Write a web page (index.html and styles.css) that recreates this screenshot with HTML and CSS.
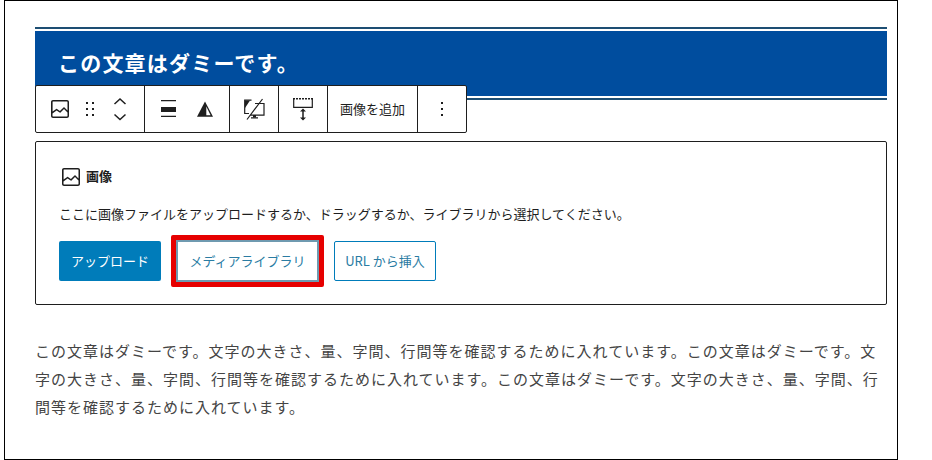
FILE: index.html
```html
<!DOCTYPE html>
<html lang="ja">
<head>
<meta charset="utf-8">
<title>画像ブロック</title>
<link rel="stylesheet" href="styles.css">
</head>
<body>
<div class="frame">
  <div class="hero">
    <div class="hero-inner"><h2 class="hero-title">この文章はダミーです。</h2></div>
    <div class="toolbar">
      <div class="group group-first">
        <svg class="icon" viewBox="0 0 24 24"><path d="M19 3H5c-1.1 0-2 .9-2 2v14c0 1.100.9 2 2 2h14c1.100 0 2-.9 2-2V5c0-1.100-.9-2-2-2zM5 4.500h14c.3 0 .5.2.5.5v8.400l-3-2.900c-.3-.3-.8-.3-1 0L11.900 14 9 12c-.3-.2-.6-.2-.8 0l-3.600 2.600V5c-.1-.3.1-.5.4-.5zm14 15H5c-.3 0-.5-.2-.5-.5v-2.400l4.100-3 3 1.900c.3.2.7.2.9-.1L16 12l3.500 3.400V19c0 .3-.2.5-.5.5z"/></svg>
        <svg class="icon" viewBox="0 0 24 24"><path d="M8 7h2V5H8zM8 13h2v-2H8zM8 19h2v-2H8zM14 5v2h2V5zM14 13h2v-2h-2zM14 19h2v-2h-2z"/></svg>
        <svg class="icon-tall" viewBox="0 0 24 30"><path class="line" d="M6.500 10 12 5l5.500 5M6.500 20.500l5.500 5 5.500-5"/></svg>
      </div>
      <div class="group">
        <svg class="icon" viewBox="0 0 24 24"><path d="M4 3h15v1.200H4zM4 10h15v5H4zM4 18.800h15V20H4z"/></svg>
        <svg class="icon" viewBox="0 0 24 24"><path d="M12 4.500 4 19.700h8z"/><path d="M12 4.500l8 15.200h-8zm1.300 5v8.700h4.300z"/></svg>
      </div>
      <div class="group">
        <svg class="icon" viewBox="0 0 24 24"><path class="line thin" d="M9.500 3.200H2.700V16.500H7M13 6.500h9V18.200H8M20.500 2 5 22.500M9 20.800H16"/><path d="M3 3.500h5L3 11z"/><path d="M11 18h3v2.500h-3z"/></svg>
      </div>
      <div class="group">
        <svg class="icon" viewBox="0 0 24 24"><path class="line thin" d="M2.700 2v8.300h18.600V2"/><path class="line dashed" d="M2 1.800h20"/><path class="line" d="M12 13v9"/><path d="M12 11.500l3 3H9zM12 23.500l-3-3h6z"/></svg>
      </div>
      <div class="group"><span class="tool-label">画像を追加</span></div>
      <div class="group group-last">
        <svg class="icon" viewBox="0 0 24 24"><path d="M11 5h2v2h-2zM11 11h2v2h-2zM11 17h2v2h-2z"/></svg>
      </div>
    </div>
  </div>

  <div class="placeholder">
    <div class="placeholder-title">
      <svg class="icon" viewBox="0 0 24 24"><path d="M19 3H5c-1.100 0-2 .9-2 2v14c0 1.100.9 2 2 2h14c1.100 0 2-.9 2-2V5c0-1.100-.9-2-2-2zM5 4.500h14c.3 0 .5.2.5.5v8.400l-3-2.900c-.3-.3-.8-.3-1 0L11.900 14 9 12c-.3-.2-.6-.2-.8 0l-3.600 2.600V5c-.1-.3.1-.5.4-.5zm14 15H5c-.3 0-.5-.2-.5-.5v-2.400l4.100-3 3 1.900c.3.2.7.2.9-.1L16 12l3.500 3.400V19c0 .3-.2.5-.5.5z"/></svg>
      <span class="placeholder-name">画像</span>
    </div>
    <p class="instructions">ここに画像ファイルをアップロードするか、ドラッグするか、ライブラリから選択してください。</p>
    <div class="actions">
      <button class="btn btn-primary">アップロード</button>
      <div class="marker"><button class="btn btn-outline btn-marked">メディアライブラリ</button></div>
      <button class="btn btn-outline btn-url">URL から挿入</button>
    </div>
  </div>

  <p class="body-text">この文章はダミーです。文字の大きさ、量、字間、行間等を確認するために入れています。この文章はダミーです。文字の大きさ、量、字間、行間等を確認するために入れています。この文章はダミーです。文字の大きさ、量、字間、行間等を確認するために入れています。</p>
</div>
</body>
</html>
```
FILE: styles.css
```css
* { box-sizing: border-box; }

html, body {
  margin: 0;
  padding: 0;
  background: #fff;
}

body {
  width: 932px;
  height: 460px;
  overflow: hidden;
  padding-left: 4px;
  font-family: "Noto Sans CJK JP", "Noto Sans", sans-serif;
  color: #1e1e1e;
}

.frame {
  width: 894px;
  height: 460px;
  border: 1px solid #000;
  padding: 26px 10px 0 30px;
}

.hero {
  position: relative;
  border-top: 2px solid #1d4e73;
  border-bottom: 2px solid #1d4e73;
  padding: 2px 0;
}

.hero-inner {
  background: #004d9e;
  padding: 15px 23px 17px;
}

.hero-title {
  margin: 0;
  font-size: 21px;
  line-height: 33px;
  font-weight: 700;
  letter-spacing: 1.2px;
  color: #fff;
}

.toolbar {
  position: absolute;
  top: 56px;
  left: 0;
  display: flex;
  height: 48px;
  background: #fff;
  border: 1px solid #1e1e1e;
  border-radius: 2px;
}

.group {
  display: flex;
  align-items: center;
  gap: 12px;
  padding: 0 12px;
  border-right: 1px solid #1e1e1e;
}

.group-first { gap: 6px; }
.group-last { border-right: 0; }

.icon {
  display: block;
  width: 24px;
  height: 24px;
  fill: #1e1e1e;
}

.icon-tall {
  display: block;
  width: 24px;
  height: 30px;
}

.line {
  fill: none;
  stroke: #1e1e1e;
  stroke-width: 1.5;
}

.thin { stroke-width: 1.2; }
.dashed { stroke-dasharray: 2 1; }

.tool-label {
  font-size: 13px;
  line-height: 20px;
}

.placeholder {
  margin-top: 41px;
  height: 164px;
  border: 1px solid #1e1e1e;
  border-radius: 2px;
  padding: 23px;
  background: #fff;
}

.placeholder-title {
  display: flex;
  align-items: center;
  gap: 3px;
  height: 24px;
  font-size: 13px;
  font-weight: 700;
}

.placeholder-name {
  line-height: 20px;
  margin-top: -3px;
}

.instructions {
  margin: 15px 0 0;
  font-size: 13px;
  line-height: 20px;
}

.actions {
  display: flex;
  gap: 16px;
  margin-top: 17px;
}

.btn {
  display: block;
  height: 40px;
  padding: 0;
  border-radius: 2px;
  white-space: nowrap;
  font: 400 13px/20px "Noto Sans CJK JP", "Noto Sans", sans-serif;
}

.btn-primary {
  width: 102px;
  background: #007cba;
  border: 0;
  color: #fff;
}

.btn-outline {
  background: #fff;
  border: 1px solid #007cba;
  color: #2a7ca3;
}

.marker {
  margin: -6px;
  border: 5px solid #e60000;
  border-radius: 2px;
}

.btn-marked {
  width: 143px;
  height: 42px;
  border: 2px solid #6f9ab0;
  border-radius: 0;
}

.btn-url { width: 102px; }

.body-text {
  margin: 32px 0 0;
  font-size: 15px;
  line-height: 28px;
  letter-spacing: 1px;
  color: #444;
}
```
